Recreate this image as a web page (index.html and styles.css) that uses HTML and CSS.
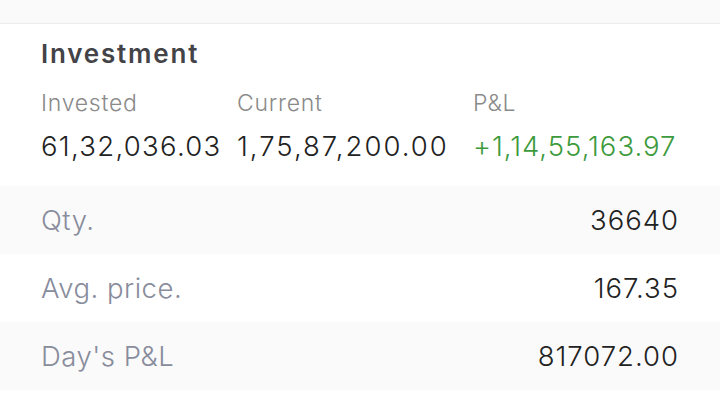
FILE: index.html
```html
<!DOCTYPE html>
<html lang="en">
<head>
    <meta charset="UTF-8">
    <meta name="viewport" content="width=device-width, initial-scale=1.0">
    <title>Investment</title>
    <link rel="stylesheet" href="styles.css">
</head>
<body>
    <div class="top-strip"></div>
    <div class="summary">
        <h1>Investment</h1>
        <div class="totals">
            <div class="total-col">
                <div class="label">Invested</div>
                <div class="value">61,32,036.03</div>
            </div>
            <div class="total-col">
                <div class="label">Current</div>
                <div class="value wide">1,75,87,200.00</div>
            </div>
            <div class="total-col">
                <div class="label">P&amp;L</div>
                <div class="value profit">+1,14,55,163.97</div>
            </div>
        </div>
    </div>
    <div class="details">
        <div class="row shaded">
            <span class="row-label">Qty.</span>
            <span class="row-value">36640</span>
        </div>
        <div class="row">
            <span class="row-label">Avg. price.</span>
            <span class="row-value">167.35</span>
        </div>
        <div class="row shaded">
            <span class="row-label">Day's P&amp;L</span>
            <span class="row-value">817072.00</span>
        </div>
    </div>
</body>
</html>
```

FILE: styles.css
```css
body {
    font-family: Inter, "Noto Sans", sans-serif;
    background-color: #fff;
    margin: 0;
    padding: 0;
    color: #222;
}
.top-strip {
    height: 23px;
    background-color: #fafafa;
    border-bottom: 1px solid #ececec;
}
.summary {
    padding: 14px 41px 0;
}
h1 {
    margin: 0;
    font-size: 26px;
    line-height: 32px;
    font-weight: 600;
    color: #434348;
    letter-spacing: 1.8px;
}
.totals {
    display: grid;
    grid-template-columns: 196px 236px auto;
    margin-top: 19px;
}
.label {
    font-size: 23px;
    line-height: 28px;
    color: #8a8a8a;
    font-weight: 300;
    letter-spacing: 0.75px;
}
.value {
    font-size: 27.5px;
    line-height: 34px;
    margin-top: 12px;
    font-weight: 300;
    letter-spacing: 1.3px;
}
.wide {
    letter-spacing: 2px;
}
.profit {
    color: #3d9a3d;
    letter-spacing: 1px;
}
.details {
    margin-top: 23px;
}
.row {
    display: flex;
    justify-content: space-between;
    align-items: center;
    height: 68px;
    padding: 0 41px;
}
.shaded {
    background-color: #fafafa;
}
.row-label {
    font-size: 27.5px;
    line-height: 34px;
    font-weight: 300;
    color: #888c9c;
    letter-spacing: 0.5px;
}
.row-value {
    font-size: 27.5px;
    line-height: 34px;
    font-weight: 300;
    color: #222;
    letter-spacing: 1px;
}
```
